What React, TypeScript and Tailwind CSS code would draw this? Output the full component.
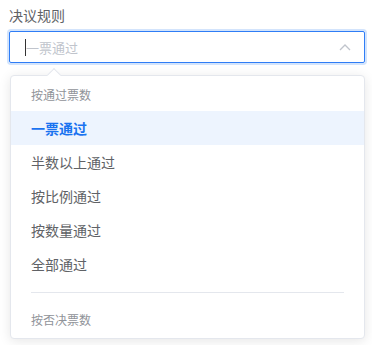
import React from "react";

export default function App() {
  const items = ["一票通过", "半数以上通过", "按比例通过", "按数量通过", "全部通过"];
  return (
    <div
      className="w-[372px] h-[345px] bg-white relative overflow-hidden"
      style={{ fontFamily: '"Noto Sans CJK SC", "Noto Sans", sans-serif' }}
    >
      <div className="pl-[9px] pt-[6px] text-[14px] leading-[18px] text-[#606266]">决议规则</div>
      <div className="mt-[7px] ml-[9px] w-[356px] h-[32px] border border-[#2f7df6] rounded-[2px] shadow-[0_0_0_2px_#d3e4fc] flex items-center pl-[15px] pr-[13px]">
        <span className="w-[1px] h-[17px] bg-[#333]" />
        <span className="text-[13px] text-[#c0c4cc] leading-none">一票通过</span>
        <svg className="ml-auto" width="12" height="8" viewBox="0 0 12 8">
          <path d="M1 7 L6 2 L11 7" fill="none" stroke="#c0c4cc" strokeWidth="1.3" />
        </svg>
      </div>
      <div className="relative mt-[12px] ml-[10px] w-[355px] h-[264px] border border-[#e4e7ed] rounded-[4px] bg-white shadow-[0_2px_12px_0_rgba(0,0,0,0.1)] pt-[3px] pb-[3px]">
        <div className="absolute -top-[6px] left-[38px] w-[10px] h-[10px] rotate-45 bg-white border-l border-t border-[#e4e7ed]" />
        <div className="h-[32px] flex items-center pl-[20px] text-[12px] text-[#909399]">按通过票数</div>
        {items.map((t, i) => (
          <div
            key={t}
            className={
              i === 0
                ? "h-[34px] flex items-center pl-[20px] text-[14px] font-bold text-[#1a73f0] bg-[#edf4fe]"
                : "h-[34px] flex items-center pl-[20px] text-[14px] text-[#606266]"
            }
          >
            {t}
          </div>
        ))}
        <div className="mx-[20px] mt-[11px] h-px bg-[#e4e7ed]" />
        <div className="h-[32px] mt-[11px] flex items-center pl-[20px] text-[12px] text-[#909399]">按否决票数</div>
      </div>
    </div>
  );
}
